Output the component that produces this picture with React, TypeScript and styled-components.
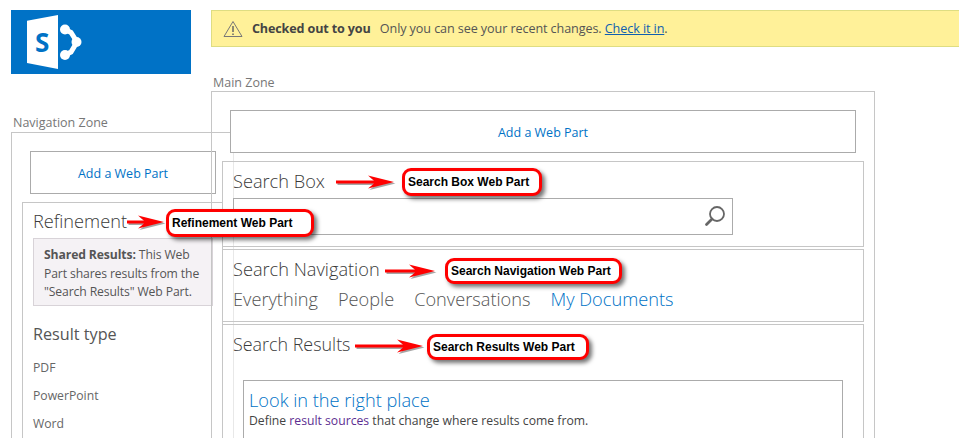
import React from "react";
import styled, { createGlobalStyle } from "styled-components";

const GlobalStyle = createGlobalStyle`
  html, body {
    margin: 0;
    padding: 0;
    background: #fff;
  }
`;

const Page = styled.div`
  position: relative;
  width: 959px;
  height: 438px;
  overflow: hidden;
  background: #fff;
  font-family: "Open Sans", "Noto Sans", sans-serif;
  color: #444;
`;

const TopRow = styled.div`
  display: flex;
  gap: 20px;
  padding: 10px 0 0 11px;
`;

const LogoTile = styled.div`
  width: 180px;
  height: 64px;
  flex: none;
  background: #0072c6;
`;

const Banner = styled.div`
  flex: 1;
  height: 37px;
  box-sizing: border-box;
  display: flex;
  align-items: center;
  gap: 9px;
  padding-left: 11px;
  background: #fff199;
  border: 1px solid #dedd82;
  border-right: none;
  font-size: 12.6px;
  letter-spacing: -0.09px;
  color: #555;

  b {
    color: #444;
    margin-right: 6px;
    font-weight: 700;
    letter-spacing: -0.15px;
  }

  a {
    color: #0f5fb0;
    text-decoration: underline;
  }
`;

const Zones = styled.div`
  display: flex;
  padding-left: 11px;
`;

const LeftColumn = styled.div`
  width: 200px;
  flex: none;
  padding-top: 40px;
`;

const ZoneLabel = styled.div`
  height: 18px;
  padding-left: 2px;
  font-size: 12.5px;
  line-height: 17px;
  color: #777;
`;

const MainLabel = styled(ZoneLabel)`
  height: 17px;
`;

const NavZone = styled.div`
  position: relative;
  width: 223px;
  height: 320px;
  box-sizing: border-box;
  padding: 18px 0 0 10px;
  border: 1px solid #c6c6c6;
  border-right-color: #e8e8e8;
`;

const AddPart = styled.div<{ $width: number }>`
  width: ${(p) => p.$width}px;
  height: 43px;
  box-sizing: border-box;
  margin: 0 0 8px 8px;
  padding-top: 1px;
  display: flex;
  align-items: center;
  justify-content: center;
  border: 1px solid #ababab;
  background: #fff;
  font-size: 12.5px;
  color: #0072c6;
`;

const Refinement = styled.div`
  width: 201px;
  height: 260px;
  box-sizing: border-box;
  padding: 6px 10px 0;
  border: 1px solid #c6c6c6;
  background: #fff;
`;

const PartTitle = styled.div`
  font-size: 18.2px;
  font-weight: 300;
  line-height: 24px;
  color: #3a3a3a;
`;

const ResultsTitle = styled(PartTitle)`
  font-size: 17.9px;
`;

const SharedNote = styled.div`
  width: 180px;
  height: 68px;
  box-sizing: border-box;
  margin-top: 5px;
  padding: 7px 10px;
  border: 1px solid #d8d3d8;
  background: #f5f2f5;
  font-size: 12.2px;
  line-height: 18.5px;
  letter-spacing: -0.12px;
  color: #555;

  b {
    font-weight: 700;
    color: #555;
  }
`;

const FilterHead = styled.div`
  margin-top: 16px;
  font-size: 16.2px;
  font-weight: 400;
  line-height: 24px;
  color: #555;
`;

const FilterItem = styled.div`
  margin-top: 12px;
  height: 20px;
  font-size: 12.2px;
  line-height: 20px;
  color: #666;

  & + & {
    margin-top: 8px;
  }
`;

const MainColumn = styled.div`
  flex: none;
  width: 664px;
`;

const MainZone = styled.div`
  position: relative;
  height: 360px;
  box-sizing: border-box;
  padding: 18px 0 0 10px;
  border: 1px solid #c6c6c6;
`;

const WebPart = styled.div<{ $height: number }>`
  width: 642px;
  height: ${(p) => p.$height}px;
  box-sizing: border-box;
  margin-bottom: 2px;
  padding: 7px 10px 0;
  border: 1px solid #c6c6c6;
`;

const SearchInput = styled.div`
  width: 500px;
  height: 37px;
  box-sizing: border-box;
  margin-top: 5px;
  display: flex;
  align-items: center;
  justify-content: space-between;
  padding: 0 6px 0 12px;
  border: 1px solid #ababab;
`;

const SearchPlaceholder = styled.span`
  font-size: 18px;
  font-weight: 300;
  color: #666;
`;

const NavTabs = styled.div`
  display: flex;
  gap: 20px;
  margin-top: 6px;
`;

const Tab = styled.span<{ $active?: boolean }>`
  font-size: 18.2px;
  font-weight: 300;
  line-height: 24px;
  color: ${(p) => (p.$active ? "#0072c6" : "#555")};
`;

const Promo = styled.div`
  width: 600px;
  height: 80px;
  box-sizing: border-box;
  margin: 24px 0 0 10px;
  padding: 7px 5px;
  border: 1px solid #ababab;
`;

const PromoTitle = styled.div`
  font-size: 18.2px;
  font-weight: 300;
  line-height: 24px;
  color: #0072c6;
`;

const PromoText = styled.div`
  font-size: 12.2px;
  line-height: 17px;
  color: #444;

  a {
    color: #5c2d91;
  }
`;

const Callout = styled.div<{ $x: number; $y: number; $w: number; $h: number }>`
  position: absolute;
  left: ${(p) => p.$x}px;
  top: ${(p) => p.$y}px;
  width: ${(p) => p.$w}px;
  height: ${(p) => p.$h}px;
  box-sizing: border-box;
  display: flex;
  align-items: center;
  padding-left: 3px;
  background: #fff;
  border: 3px solid #f00;
  border-radius: 9px;
  box-shadow: 3px 3px 4px rgba(0, 0, 0, 0.55);
  font-family: "Liberation Sans", Arial, sans-serif;
  font-size: 12px;
  font-weight: 700;
  color: #000;
  white-space: nowrap;
`;

const ArrowMark = styled.svg<{ $x: number; $y: number }>`
  position: absolute;
  left: ${(p) => p.$x}px;
  top: ${(p) => p.$y}px;
  overflow: visible;
`;

const Arrow = ({ x, y, w }: { x: number; y: number; w: number }) => {
  const d = `M0 5.6H${w - 20}L${w - 26} 0.5 ${w} 7 ${w - 26} 13.5 ${w - 20} 8.4H0Z`;
  return (
    <ArrowMark $x={x} $y={y} width={w} height={14} viewBox={`0 0 ${w} 14`}>
      <path d={d} fill="#000" opacity="0.35" transform="translate(1.5 1.5)" />
      <path d={d} fill="#f00" />
    </ArrowMark>
  );
};

const Logo = () => (
  <svg width="180" height="64" viewBox="0 0 180 64">
    <path fill="#fff" d="M16 10.700 47 5v54l-31-6z" />
    <text
      x="24"
      y="42"
      fill="#0072c6"
      fontFamily="'Open Sans', sans-serif"
      fontSize="26"
      fontWeight="700"
    >
      S
    </text>
    <path
      fill="none"
      stroke="#fff"
      strokeWidth="5"
      d="M54 19.500 60 22.500 66 32 60 42 54 45"
    />
    <circle cx="54" cy="19.500" r="5" fill="#fff" />
    <circle cx="54" cy="45" r="5" fill="#fff" />
    <circle cx="65.500" cy="32" r="5" fill="#fff" />
  </svg>
);

const App = () => {
  return (
    <Page>
      <GlobalStyle />
      <TopRow>
        <LogoTile>
          <Logo />
        </LogoTile>
        <Banner>
          <svg width="20" height="18" viewBox="0 0 20 18">
            <path
              d="M10 1.500 19 16.500H1Z"
              fill="none"
              stroke="#777"
              strokeWidth="1"
              strokeLinejoin="round"
            />
            <path d="M10 6v6M10 13.500v1.500" stroke="#666" strokeWidth="1.500" />
          </svg>
          <span>
            <b>Checked out to you</b> Only you can see your recent changes.{" "}
            <a>Check it in</a>.
          </span>
        </Banner>
      </TopRow>
      <Zones>
        <LeftColumn>
          <ZoneLabel>Navigation Zone</ZoneLabel>
          <NavZone>
            <AddPart $width={186}>Add a Web Part</AddPart>
            <Refinement>
              <PartTitle>Refinement</PartTitle>
              <SharedNote>
                <b>Shared Results:</b> This Web Part shares results from the
                "Search Results" Web Part.
              </SharedNote>
              <FilterHead>Result type</FilterHead>
              <FilterItem>PDF</FilterItem>
              <FilterItem>PowerPoint</FilterItem>
              <FilterItem>Word</FilterItem>
            </Refinement>
          </NavZone>
        </LeftColumn>
        <MainColumn>
          <MainLabel>Main Zone</MainLabel>
          <MainZone>
            <AddPart $width={626}>Add a Web Part</AddPart>
            <WebPart $height={86}>
              <PartTitle>Search Box</PartTitle>
              <SearchInput>
                <SearchPlaceholder>Search</SearchPlaceholder>
                <svg width="22" height="22" viewBox="0 0 22 22">
                  <circle cx="13" cy="8" r="7" fill="none" stroke="#666" strokeWidth="1.800" />
                  <path d="M8 13 2.500 18.500" stroke="#666" strokeWidth="2.800" strokeLinecap="round" />
                </svg>
              </SearchInput>
            </WebPart>
            <WebPart $height={73}>
              <PartTitle>Search Navigation</PartTitle>
              <NavTabs>
                <Tab>Everything</Tab>
                <Tab>People</Tab>
                <Tab>Conversations</Tab>
                <Tab $active>My Documents</Tab>
              </NavTabs>
            </WebPart>
            <WebPart $height={130}>
              <ResultsTitle>Search Results</ResultsTitle>
              <Promo>
                <PromoTitle>Look in the right place</PromoTitle>
                <PromoText>
                  Define <a>result sources</a> that change where results come from.
                </PromoText>
              </Promo>
            </WebPart>
          </MainZone>
        </MainColumn>
      </Zones>
      <Arrow x={336} y={175} w={58} />
      <Callout $x={402} $y={168} $w={140} $h={28}>Search Box Web Part</Callout>
      <Arrow x={127} y={215} w={37} />
      <Callout $x={166} $y={209} $w={148} $h={28}>Refinement Web Part</Callout>
      <Arrow x={385} y={264} w={50} />
      <Callout $x={445} $y={258} $w={177} $h={26}>Search Navigation Web Part</Callout>
      <Arrow x={355} y={339} w={68} />
      <Callout $x={427} $y={334} $w={162} $h={26}>Search Results Web Part</Callout>
    </Page>
  );
};

export default App;
